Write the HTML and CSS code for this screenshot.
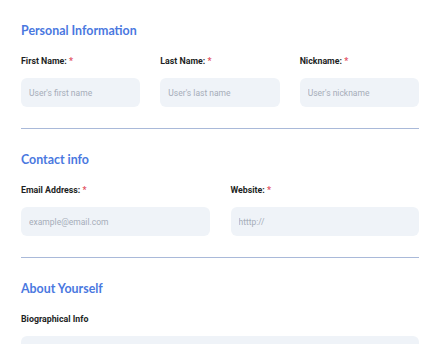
FILE: index.html
```html
<!DOCTYPE html>
<html lang="en">
<head>
    <meta charset="UTF-8">
    <meta name="viewport" content="width=device-width, initial-scale=1.0">
    <title>Profile</title>
    <link rel="stylesheet" href="styles.css">
</head>
<body>
    <form class="profile-form">
        <section class="form-section">
            <h2>Personal Information</h2>
            <div class="row three">
                <div class="field">
                    <label>First Name: <span class="req">*</span></label>
                    <input type="text" placeholder="User's first name">
                </div>
                <div class="field">
                    <label>Last Name: <span class="req">*</span></label>
                    <input type="text" placeholder="User's last name">
                </div>
                <div class="field">
                    <label>Nickname: <span class="req">*</span></label>
                    <input type="text" placeholder="User's nickname">
                </div>
            </div>
        </section>

        <section class="form-section">
            <h2>Contact info</h2>
            <div class="row two">
                <div class="field">
                    <label>Email Address: <span class="req">*</span></label>
                    <input type="text" placeholder="example@email.com">
                </div>
                <div class="field">
                    <label>Website: <span class="req">*</span></label>
                    <input type="text" placeholder="htttp://">
                </div>
            </div>
        </section>

        <section class="form-section last">
            <h2>About Yourself</h2>
            <div class="field">
                <label>Biographical Info</label>
                <textarea rows="4"></textarea>
            </div>
        </section>
    </form>
</body>
</html>
```

FILE: styles.css
```css
body {
    margin: 0;
    padding: 0 21px;
    background: #ffffff;
    font-family: Roboto, "Liberation Sans", sans-serif;
    color: #1d1f24;
    height: 344px;
    overflow: hidden;
}

.form-section {
    padding: 23px 0 21px;
    border-bottom: 1px solid #a9b9d9;
}

.form-section.last {
    border-bottom: none;
}

.form-section h2 {
    margin: 0 0 17px;
    font-family: Lato, "Open Sans", sans-serif;
    font-size: 12.4px;
    line-height: 16px;
    font-weight: 700;
    color: #4a78df;
}

.row {
    display: grid;
    gap: 20px;
}

.row.three {
    grid-template-columns: repeat(3, 1fr);
}

.row.two {
    grid-template-columns: repeat(2, 1fr);
    gap: 21px;
}

.field label {
    display: block;
    font-size: 8.8px;
    line-height: 10px;
    font-weight: 700;
    margin-bottom: 12px;
}

.req {
    color: #e2505f;
}

.field input,
.field textarea {
    display: block;
    width: 100%;
    box-sizing: border-box;
    height: 29px;
    padding: 0 8px;
    border: none;
    border-radius: 6px;
    background: #eff3f8;
    font-family: Roboto, "Liberation Sans", sans-serif;
    font-size: 8.5px;
    color: #333;
}

.field textarea {
    height: 80px;
    resize: none;
}

.field input::placeholder {
    color: #a6adb8;
}
```
